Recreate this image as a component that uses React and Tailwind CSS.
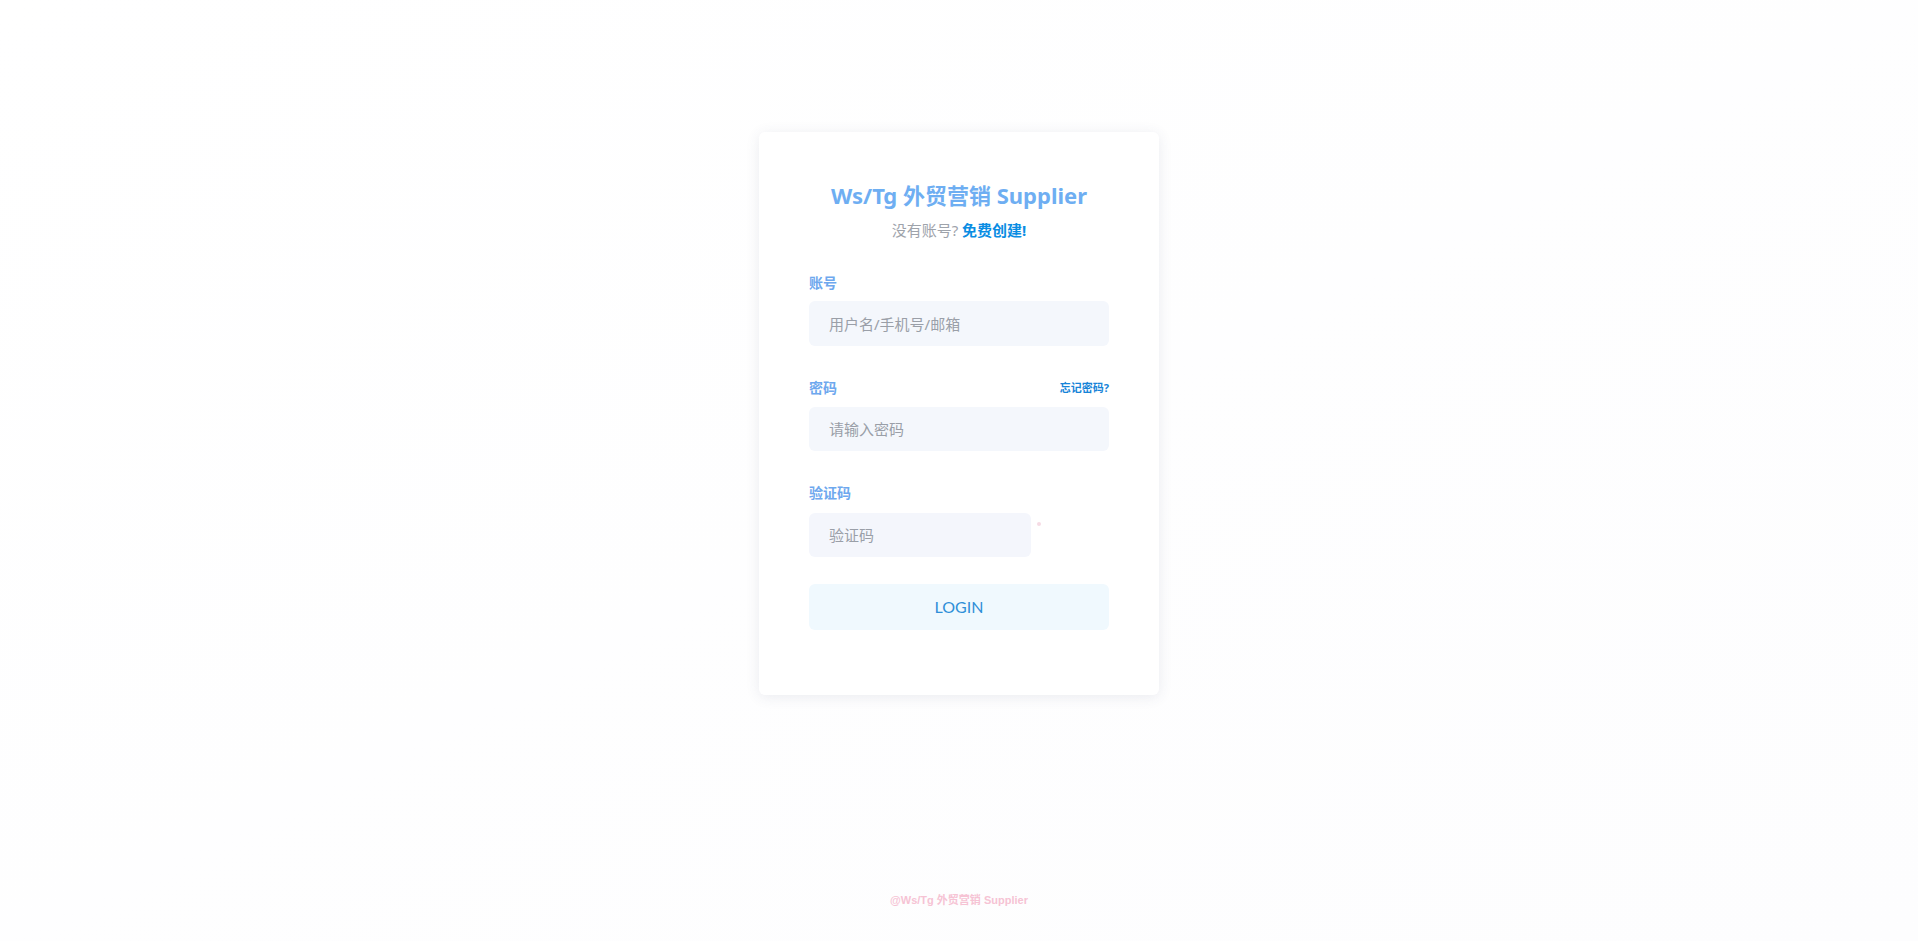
import React from "react";

export default function App() {
  const font = { fontFamily: '"Noto Sans", "Noto Sans CJK SC", sans-serif' };
  return (
    <div className="min-h-[941px] w-full bg-gradient-to-br from-white to-[#fdfdfe] flex flex-col items-center" style={font}>
      <div className="mt-[132px] w-[400px] bg-white rounded-[6px] shadow-[0_2px_14px_rgba(60,70,110,0.10)] px-[50px] pt-[47px] pb-[65px] flex flex-col">
        <h1 className="text-center text-[22px] leading-[32px] font-bold text-[#6eaef2]">Ws/Tg 外贸营销 Supplier</h1>
        <p className="mt-[9px] text-center text-[15px] leading-[20px] text-[#9ea3ab]">
          没有账号? <a className="font-bold text-[#0a8de3]">免费创建!</a>
        </p>

        <label className="mt-[33px] text-[14px] leading-[20px] font-bold text-[#6ea8ee]">账号</label>
        <input
          className="mt-[8px] h-[45px] w-full rounded-[6px] bg-[#f4f7fc] px-[20px] text-[15px] text-gray-600 placeholder:text-[#9a9fa8] outline-none"
          placeholder="用户名/手机号/邮箱"
        />

        <div className="mt-[32px] flex items-center justify-between">
          <label className="text-[14px] leading-[20px] font-bold text-[#6ea8ee]">密码</label>
          <a className="text-[11px] font-bold text-[#1784d8]">忘记密码?</a>
        </div>
        <input
          type="password"
          className="mt-[9px] h-[44px] w-full rounded-[6px] bg-[#f4f7fc] px-[20px] text-[15px] text-gray-600 placeholder:text-[#9a9fa8] outline-none"
          placeholder="请输入密码"
        />

        <label className="mt-[32px] text-[14px] leading-[20px] font-bold text-[#6ea8ee]">验证码</label>
        <div className="mt-[10px] flex items-start gap-[6px]">
          <input
            className="h-[44px] w-[222px] rounded-[6px] bg-[#f4f6fc] px-[20px] text-[15px] text-gray-600 placeholder:text-[#9a9fa8] outline-none"
            placeholder="验证码"
          />
          <div className="mt-[9px] h-[4px] w-[4px] rounded-full bg-[#f6dbe4]" />
        </div>

        <button className="mt-[27px] h-[46px] w-full rounded-[6px] bg-[#f0f9fe] text-[16px] text-[#2f8fd8]" style={{ fontFamily: 'Lato, "Noto Sans", sans-serif' }}>
          LOGIN
        </button>
      </div>

      <div className="mt-[197px] text-[11px] font-bold text-[#f6c3d4]" style={{ fontFamily: '"Liberation Sans", "Noto Sans CJK SC", sans-serif' }}>
        @Ws/Tg 外贸营销 Supplier
      </div>
    </div>
  );
}
